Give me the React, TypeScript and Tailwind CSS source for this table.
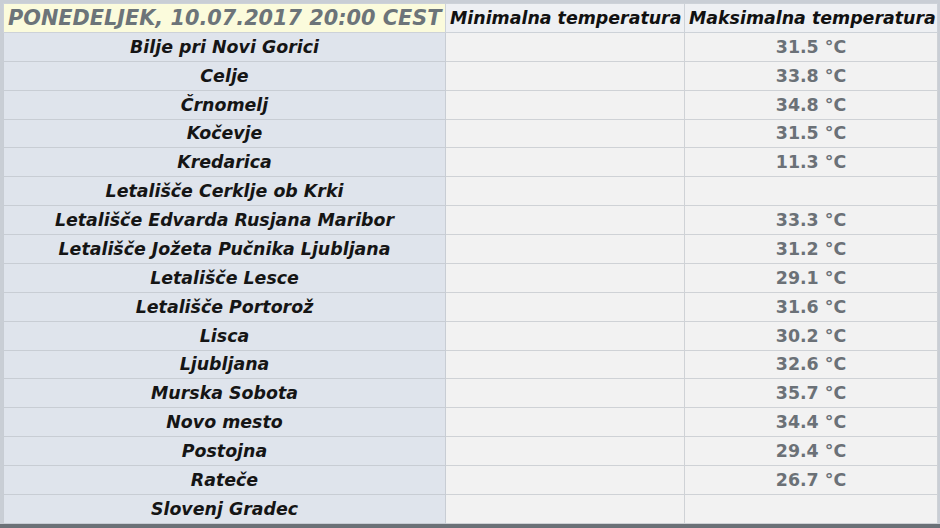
import React from 'react';

interface Row {
  postaja: string;
  min?: string;
  max?: string;
}

const rows: Row[] = [
  { postaja: 'Bilje pri Novi Gorici', max: '31.5 °C' },
  { postaja: 'Celje', max: '33.8 °C' },
  { postaja: 'Črnomelj', max: '34.8 °C' },
  { postaja: 'Kočevje', max: '31.5 °C' },
  { postaja: 'Kredarica', max: '11.3 °C' },
  { postaja: 'Letališče Cerklje ob Krki' },
  { postaja: 'Letališče Edvarda Rusjana Maribor', max: '33.3 °C' },
  { postaja: 'Letališče Jožeta Pučnika Ljubljana', max: '31.2 °C' },
  { postaja: 'Letališče Lesce', max: '29.1 °C' },
  { postaja: 'Letališče Portorož', max: '31.6 °C' },
  { postaja: 'Lisca', max: '30.2 °C' },
  { postaja: 'Ljubljana', max: '32.6 °C' },
  { postaja: 'Murska Sobota', max: '35.7 °C' },
  { postaja: 'Novo mesto', max: '34.4 °C' },
  { postaja: 'Postojna', max: '29.4 °C' },
  { postaja: 'Rateče', max: '26.7 °C' },
  { postaja: 'Slovenj Gradec' },
];

const App: React.FC = () => {
  return (
    <div className="w-[940px] h-[528px] bg-[#c9ced5] flex flex-col overflow-hidden font-['DejaVu_Sans',Verdana,sans-serif]">
      <div className="flex-1 pt-[3px] pl-[3px] pr-[3px]">
        <table className="w-[934px] border-collapse table-fixed text-[17.4px] leading-[20px] font-bold">
          <colgroup>
            <col className="w-[442px]" />
            <col className="w-[239px]" />
            <col className="w-[253px]" />
          </colgroup>
          <thead>
            <tr className="h-[28.875px]">
              <th className="p-0 bg-[#fbfbdc] text-[#6c7479] italic text-[20.8px] text-left pl-[4px] whitespace-nowrap overflow-hidden border border-[#cdd2d8]">
                PONEDELJEK, 10.07.2017 20:00 CEST
              </th>
              <th className="p-0 bg-[#eef0f3] text-[#111] italic text-left pl-[4px] whitespace-nowrap border border-[#cdd2d8]">
                Minimalna temperatura
              </th>
              <th className="p-0 bg-[#eef0f3] text-[#111] italic text-left pl-[4px] whitespace-nowrap border border-[#cdd2d8]">
                Maksimalna temperatura
              </th>
            </tr>
          </thead>
          <tbody>
            {rows.map((r) => (
              <tr key={r.postaja} className="h-[28.875px]">
                <td className="p-0 bg-[#dfe4ec] text-[#151515] italic text-center whitespace-nowrap border border-[#c8cdd4]">
                  {r.postaja}
                </td>
                <td className="p-0 bg-[#f2f2f2] text-[#6b7177] text-center border border-[#cfd2d6]">{r.min}</td>
                <td className="p-0 bg-[#f2f2f2] text-[#6b7177] text-center border border-[#cfd2d6]">{r.max}</td>
              </tr>
            ))}
          </tbody>
        </table>
      </div>
      <div className="h-[6px] bg-[#6b7177]" />
    </div>
  );
};

export default App;
